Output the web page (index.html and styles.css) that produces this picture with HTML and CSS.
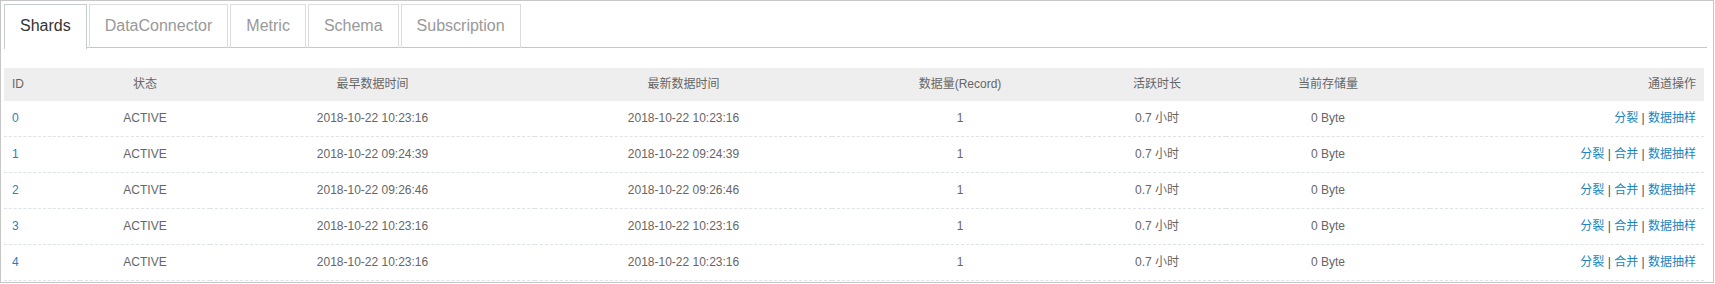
FILE: index.html
```html
<!DOCTYPE HTML>
<html lang="zh-CN">
<head>
    <meta charset="UTF-8">
    <meta name="viewport" content="width=device-width, initial-scale=1.0">
    <title>Shards</title>
    <link rel="stylesheet" href="styles.css">
</head>
<body>
    <div class="panel">
        <ul class="tabs">
            <li class="tab active">Shards</li>
            <li class="tab">DataConnector</li>
            <li class="tab">Metric</li>
            <li class="tab">Schema</li>
            <li class="tab">Subscription</li>
        </ul>

        <table class="shards">
            <colgroup>
                <col class="c-id">
                <col class="c-state">
                <col class="c-first">
                <col class="c-last">
                <col class="c-count">
                <col class="c-active">
                <col class="c-size">
                <col class="c-ops">
            </colgroup>
            <thead>
                <tr>
                    <th class="left">ID</th>
                    <th>状态</th>
                    <th>最早数据时间</th>
                    <th>最新数据时间</th>
                    <th>数据量(Record)</th>
                    <th>活跃时长</th>
                    <th>当前存储量</th>
                    <th class="right">通道操作</th>
                </tr>
            </thead>
            <tbody>
                <tr>
                    <td class="left"><a href="#">0</a></td>
                    <td>ACTIVE</td>
                    <td>2018-10-22 10:23:16</td>
                    <td>2018-10-22 10:23:16</td>
                    <td>1</td>
                    <td>0.7 小时</td>
                    <td>0 Byte</td>
                    <td class="right"><a href="#">分裂</a> <span class="sep">|</span> <a href="#">数据抽样</a></td>
                </tr>
                <tr>
                    <td class="left"><a href="#">1</a></td>
                    <td>ACTIVE</td>
                    <td>2018-10-22 09:24:39</td>
                    <td>2018-10-22 09:24:39</td>
                    <td>1</td>
                    <td>0.7 小时</td>
                    <td>0 Byte</td>
                    <td class="right"><a href="#">分裂</a> <span class="sep">|</span> <a href="#">合并</a> <span class="sep">|</span> <a href="#">数据抽样</a></td>
                </tr>
                <tr>
                    <td class="left"><a href="#">2</a></td>
                    <td>ACTIVE</td>
                    <td>2018-10-22 09:26:46</td>
                    <td>2018-10-22 09:26:46</td>
                    <td>1</td>
                    <td>0.7 小时</td>
                    <td>0 Byte</td>
                    <td class="right"><a href="#">分裂</a> <span class="sep">|</span> <a href="#">合并</a> <span class="sep">|</span> <a href="#">数据抽样</a></td>
                </tr>
                <tr>
                    <td class="left"><a href="#">3</a></td>
                    <td>ACTIVE</td>
                    <td>2018-10-22 10:23:16</td>
                    <td>2018-10-22 10:23:16</td>
                    <td>1</td>
                    <td>0.7 小时</td>
                    <td>0 Byte</td>
                    <td class="right"><a href="#">分裂</a> <span class="sep">|</span> <a href="#">合并</a> <span class="sep">|</span> <a href="#">数据抽样</a></td>
                </tr>
                <tr>
                    <td class="left"><a href="#">4</a></td>
                    <td>ACTIVE</td>
                    <td>2018-10-22 10:23:16</td>
                    <td>2018-10-22 10:23:16</td>
                    <td>1</td>
                    <td>0.7 小时</td>
                    <td>0 Byte</td>
                    <td class="right"><a href="#">分裂</a> <span class="sep">|</span> <a href="#">合并</a> <span class="sep">|</span> <a href="#">数据抽样</a></td>
                </tr>
            </tbody>
        </table>
    </div>
</body>
</html>
```

FILE: styles.css
```css
body {
    margin: 0;
    background-color: #fff;
    font-family: "Liberation Sans", Arial, "Noto Sans CJK SC", sans-serif;
    font-size: 12px;
    color: #666;
}

.panel {
    width: 1703px;
    padding: 3px 6px 1px 3px;
    border: 1px solid #c6c6c6;
}

.tabs {
    display: flex;
    gap: 2px;
    margin: 0 0 20px 0;
    padding: 0;
    list-style: none;
    height: 43px;
    border-bottom: 1px solid #c6c6c6;
}

.tab {
    height: 43px;
    padding: 0 15px;
    line-height: 42px;
    font-size: 16px;
    color: #999;
    border: 1px solid #dcdcdc;
    border-bottom: none;
}

.tab.active {
    height: 44px;
    color: #333;
    background-color: #fff;
    border-color: #c4ccd0;
}

.shards {
    width: 1700px;
    table-layout: fixed;
    border-collapse: separate;
    border-spacing: 0;
}

.c-id { width: 76px; }
.c-state { width: 130px; }
.c-first { width: 325px; }
.c-last { width: 297px; }
.c-count { width: 256px; }
.c-active { width: 138px; }
.c-size { width: 204px; }
.c-ops { width: 274px; }

.shards th {
    height: 33px;
    padding: 0 8px;
    line-height: 33px;
    font-weight: normal;
    color: #666;
    background-color: #eee;
    text-align: center;
}

.shards td {
    height: 35px;
    padding: 0 8px;
    line-height: 35px;
    text-align: center;
    border-bottom: 1px dashed #dde3e8;
}

.shards .left {
    text-align: left;
}

.shards .right {
    text-align: right;
}

.shards a {
    color: #1a84c0;
    text-decoration: none;
}

.shards .sep {
    color: #35556a;
}
```
